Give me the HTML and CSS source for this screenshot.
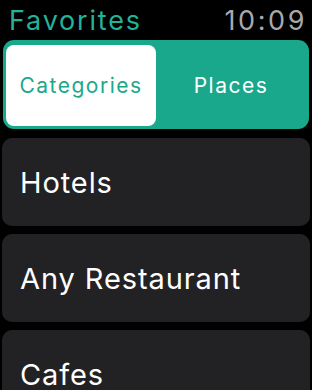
FILE: index.html
```html
<!DOCTYPE html>
<html lang="en">
<head>
    <meta charset="UTF-8">
    <meta name="viewport" content="width=device-width, initial-scale=1.0">
    <title>Favorites</title>
    <link rel="stylesheet" href="styles.css">
</head>
<body>
    <div class="screen">
        <!-- Заголовок -->
        <div class="header">
            <span class="title">Favorites</span>
            <span class="time">10:09</span>
        </div>

        <!-- Переключатель -->
        <div class="segment">
            <div class="segment-item active">Categories</div>
            <div class="segment-item">Places</div>
        </div>

        <!-- Список -->
        <div class="list">
            <div class="row">Hotels</div>
            <div class="row">Any Restaurant</div>
            <div class="row">Cafes</div>
        </div>
    </div>
</body>
</html>
```

FILE: styles.css
```css
body, html {
    margin: 0;
    padding: 0;
    background-color: #000;
    font-family: "Inter", "Roboto", sans-serif;
    height: 100vh;
    overflow: hidden;
}

.screen {
    display: flex;
    flex-direction: column;
}

/* Header */
.header {
    height: 40px;
    display: flex;
    justify-content: space-between;
    align-items: center;
    padding: 0 5px 0 9px;
}

.title {
    color: #22b399;
    font-size: 27px;
    letter-spacing: 1.8px;
}

.time {
    color: #a9a9ad;
    font-size: 27px;
    letter-spacing: 2.6px;
}

/* Segment control */
.segment {
    margin: 0 3px;
    height: 89px;
    box-sizing: border-box;
    background-color: #1aa88c;
    border-radius: 11px;
    padding: 5px 3px 3px 3px;
    display: flex;
}

.segment-item {
    flex: 1;
    display: flex;
    align-items: center;
    justify-content: center;
    color: #fff;
    font-size: 21px;
    letter-spacing: 1.5px;
    border-radius: 8px;
}

.segment-item.active {
    background-color: #fff;
    color: #1aa88c;
}

/* List */
.list {
    margin: 9px 2px 0 2px;
    display: flex;
    flex-direction: column;
    gap: 8px;
}

.row {
    height: 88px;
    flex-shrink: 0;
    background-color: #222224;
    border-radius: 10px;
    padding-left: 18px;
    display: flex;
    align-items: center;
    color: #fff;
    font-size: 29px;
    letter-spacing: 0.9px;
}
```
